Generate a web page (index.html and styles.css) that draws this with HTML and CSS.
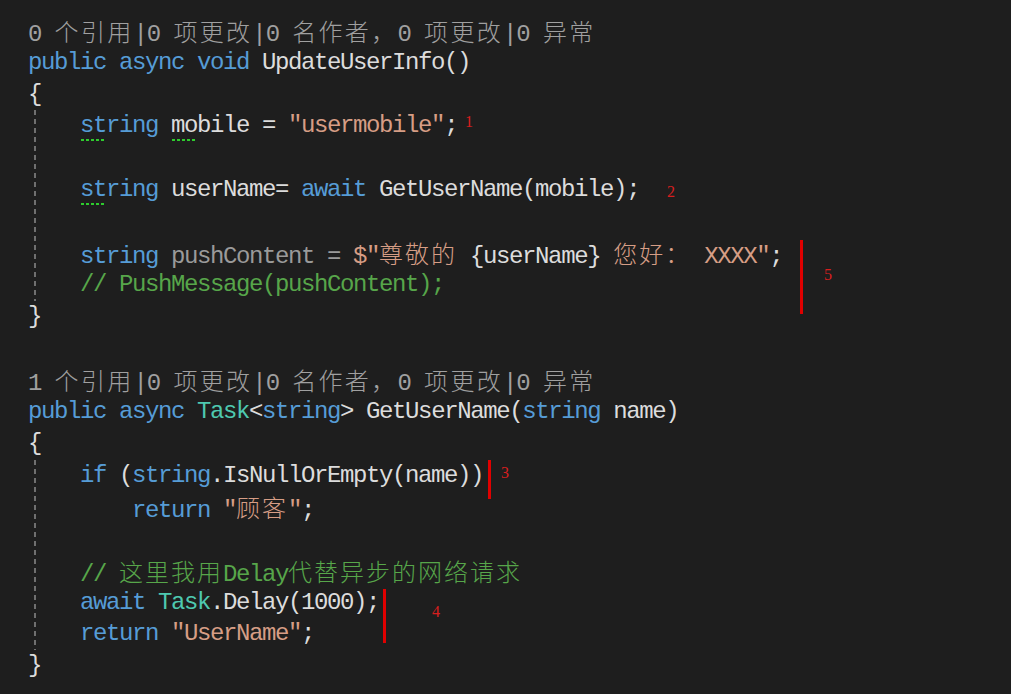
FILE: index.html
```html
<!DOCTYPE html>
<html lang="zh">
<head>
<meta charset="utf-8">
<title>UpdateUserInfo</title>
<link rel="stylesheet" href="styles.css">
</head>
<body>
<div class="editor">
  <div class="ln lens">0 <span class="cj">个引用</span>|0 <span class="cj">项更改</span>|0 <span class="cj">名作者，</span>0 <span class="cj">项更改</span>|0 <span class="cj">异常</span></div>
  <div class="ln"><span class="kw">public</span> <span class="kw">async</span> <span class="kw">void</span> UpdateUserInfo()</div>
  <div class="ln">{</div>
  <div class="body">
    <div class="ln in1"><span class="kw"><span class="sq">st</span>ring</span> <span class="sq">mo</span>bile = <span class="str">"usermobile"</span>;</div>
    <div class="ln in1"></div>
    <div class="ln in1"><span class="kw"><span class="sq">st</span>ring</span> userName= <span class="kw">await</span> GetUserName(mobile);</div>
    <div class="ln in1"></div>
    <div class="ln in1"><span class="kw">string</span> <span class="dim">pushContent =</span> <span class="str">$"<span class="cj">尊敬的</span> </span>{userName}<span class="str"> <span class="cj">您好：</span> XXXX"</span>;</div>
    <div class="ln in1"><span class="cm">// PushMessage(pushContent);</span></div>
  </div>
  <div class="ln">}</div>
  <div class="ln"></div>
  <div class="ln lens">1 <span class="cj">个引用</span>|0 <span class="cj">项更改</span>|0 <span class="cj">名作者，</span>0 <span class="cj">项更改</span>|0 <span class="cj">异常</span></div>
  <div class="ln"><span class="kw">public</span> <span class="kw">async</span> <span class="ty">Task</span>&lt;<span class="kw">string</span>&gt; GetUserName(<span class="kw">string</span> name)</div>
  <div class="ln">{</div>
  <div class="body">
    <div class="ln in1"><span class="kw">if</span> (<span class="kw">string</span>.IsNullOrEmpty(name))</div>
    <div class="ln in2"><span class="kw">return</span> <span class="str">"<span class="cj">顾客</span>"</span>;</div>
    <div class="ln in1"></div>
    <div class="ln in1"><span class="cm">// <span class="cj">这里我用</span>Delay<span class="cj">代替异步的网络请求</span></span></div>
    <div class="ln in1"><span class="kw">await</span> <span class="ty">Task</span>.Delay(1000);</div>
    <div class="ln in1"><span class="kw">return</span> <span class="str">"UserName"</span>;</div>
  </div>
  <div class="ln">}</div>

  <span class="mark mark-1">1</span>
  <span class="mark mark-2">2</span>
  <span class="bar bar-5"></span><span class="mark mark-5">5</span>
  <span class="bar bar-3"></span><span class="mark mark-3">3</span>
  <span class="bar bar-4"></span><span class="mark mark-4">4</span>
</div>
</body>
</html>
```

FILE: styles.css
```css
html, body {
  margin: 0;
  padding: 0;
  background: #1e1e1e;
}

.editor {
  position: relative;
  width: 1011px;
  height: 694px;
  overflow: hidden;
  box-sizing: border-box;
  padding: 15px 0 0 28px;
  background: #1e1e1e;
  color: #dcdcdc;
  font-family: "Liberation Mono", "Noto Sans CJK SC", monospace;
  font-size: 24px;
  letter-spacing: -1.4px;
}

.ln {
  height: 31.75px;
  line-height: 31.75px;
  white-space: pre;
}

.lens {
  color: #a0a0a0;
  letter-spacing: -1.1px;
}

.cj {
  font-family: "Noto Sans CJK SC", sans-serif;
  font-size: 24px;
  font-weight: 300;
  letter-spacing: 2px;
}

.lens .cj {
  letter-spacing: 2.3px;
}

.in1 { padding-left: 52px; }
.in2 { padding-left: 104px; }

.body {
  margin-left: -28px;
  padding-left: 28px;
  background-image: repeating-linear-gradient(to bottom, #6f6f6f 0 5px, transparent 5px 9px);
  background-repeat: no-repeat;
  background-size: 2px 100%;
  background-position: 34px 0;
}

.kw { color: #569cd6; }
.ty { color: #4ec9b0; }
.str { color: #d69d85; }
.cm { color: #57a64a; }
.dim { color: #9a9a9a; }

.sq {
  position: relative;
}
.sq::after {
  content: "";
  position: absolute;
  left: 1px;
  right: 0;
  bottom: -2px;
  height: 2px;
  background: repeating-linear-gradient(90deg, #2ecc2e 0 3px, transparent 3px 5px);
}

.mark {
  position: absolute;
  color: #d81e1e;
  font-family: "Liberation Serif", serif;
  font-size: 16px;
  letter-spacing: 0;
  line-height: 16px;
}

.bar {
  position: absolute;
  width: 3px;
  background: #e00000;
}

.mark-1 { left: 465px; top: 114px; }
.mark-2 { left: 667px; top: 184px; }

.bar-5 { left: 800px; top: 240px; height: 74px; }
.mark-5 { left: 824px; top: 267px; }

.bar-3 { left: 488px; top: 460px; height: 39px; }
.mark-3 { left: 501px; top: 465px; }

.bar-4 { left: 383px; top: 589px; height: 54px; }
.mark-4 { left: 432px; top: 604px; }
```
